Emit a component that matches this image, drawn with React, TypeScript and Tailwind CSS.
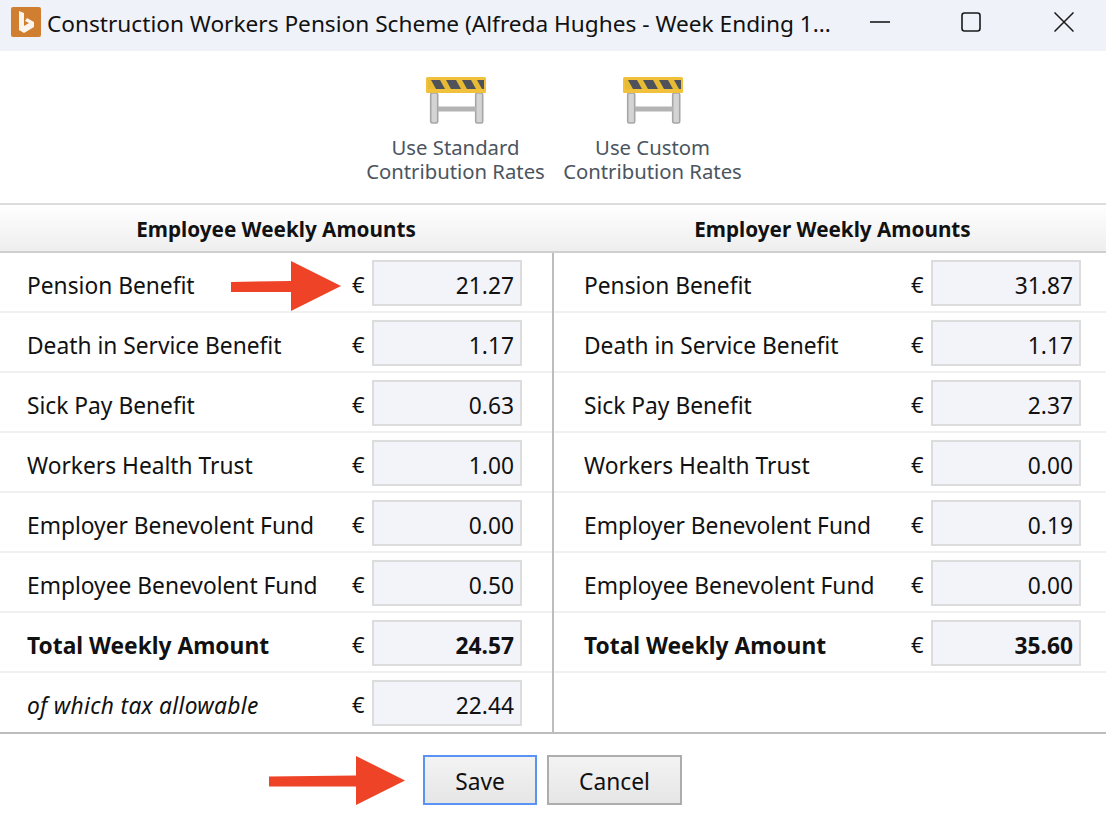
const font = { fontFamily: '"Noto Sans", "Open Sans", sans-serif' };

const left = [
  ["Pension Benefit", "21.27"],
  ["Death in Service Benefit", "1.17"],
  ["Sick Pay Benefit", "0.63"],
  ["Workers Health Trust", "1.00"],
  ["Employer Benevolent Fund", "0.00"],
  ["Employee Benevolent Fund", "0.50"],
];
const right = [
  ["Pension Benefit", "31.87"],
  ["Death in Service Benefit", "1.17"],
  ["Sick Pay Benefit", "2.37"],
  ["Workers Health Trust", "0.00"],
  ["Employer Benevolent Fund", "0.19"],
  ["Employee Benevolent Fund", "0.00"],
];

function Row({ label, value, variant, border = true, side }: { label: string; value: string; variant?: "bold" | "italic"; border?: boolean; side: "l" | "r" }) {
  return (
    <div className={`h-[60px] flex items-center pt-[2px] ${side === "l" ? "pl-[27px] pr-[30px]" : "pl-[30px] pr-[25px]"} ${border ? "border-b-2 border-[#f0f0f0]" : "pb-[2px]"}`}>
      <span className={`flex-1 pt-[6px] text-[22.75px] text-[#111] whitespace-nowrap ${variant === "bold" ? "font-bold" : ""} ${variant === "italic" ? "italic tracking-[0.3px]" : ""}`}>{label}</span>
      <span className="w-[20px] pt-[3px] text-[22px] text-[#111]">€</span>
      <div className={`w-[150px] h-[46px] pt-[6px] bg-[#f3f4f9] border-2 border-[#dcdcdc] flex items-center justify-end pr-[6px] text-[22.75px] text-[#111] ${variant === "bold" ? "font-bold" : ""}`}>{value}</div>
    </div>
  );
}

function Barrier() {
  return (
    <svg width="60" height="47" viewBox="0 0 60 47" className="blur-[0.4px]">
      <g fill="#d4d4d4" stroke="#a6a6a6" strokeWidth="1.6">
        <rect x="4.7" y="16" width="7" height="30" rx="1.5" />
        <rect x="49.7" y="16" width="7" height="30" rx="1.5" />
      </g>
      <rect x="12" y="29.5" width="38" height="5" fill="#b4b4b4" />
      <rect x="0" y="0" width="60" height="16" rx="1.5" fill="#f1c13b" />
      <rect x="2" y="3" width="56" height="9" fill="#4f525b" />
      <g fill="#e8bb35">
        <polygon points="2,3 5,3 10,12 2,12" />
        <polygon points="14,3 20,3 25,12 19,12" />
        <polygon points="30,3 36,3 41,12 35,12" />
        <polygon points="45,3 51,3 56,12 50,12" />
      </g>
    </svg>
  );
}

function Tool({ text, w }: { text: string; w: string }) {
  return (
    <div className={`${w} flex flex-col items-center`}>
      <Barrier />
      <div className="mt-[11px] text-center text-[20.3px] leading-[24px] text-[#4b5560]">{text}</div>
    </div>
  );
}

function Arrow({ w, h, shaft, className }: { w: number; h: number; shaft: number; className: string }) {
  const my = h / 2;
  return (
    <svg width={w} height={h} viewBox={`0 0 ${w} ${h}`} className={className}>
      <polygon fill="#ee4326" points={`0,${my - 4} ${shaft},${my - 5} ${shaft},0 ${w},${my} ${shaft},${h} ${shaft},${my + 6} 0,${my + 6}`} />
    </svg>
  );
}

export default function App() {
  return (
    <div className="relative w-[1106px] h-[822px] bg-white overflow-hidden" style={font}>
      <div className="h-[51px] bg-[#eff2f8] flex items-center pb-[7px]">
        <div className="ml-[11px] w-[30px] h-[30px] rounded-[2px] bg-[#cf7f2f] flex items-center justify-center">
          <svg width="18" height="24" viewBox="0 0 18 24">
            <polygon fill="#fff" opacity="0.92" points="2,1 7,3 7,16 12,13 8,11 10,8 17,12 17,17 7,23 2,20" />
          </svg>
        </div>
        <div className="ml-[6px] w-[790px] pt-[3px] text-[22.65px] text-[#111] whitespace-nowrap overflow-hidden">Construction Workers Pension Scheme (Alfreda Hughes - Week Ending 1...</div>
        <svg width="20" height="20" viewBox="0 0 20 20" className="ml-[33px]"><path d="M0 10h20" stroke="#1a1a1a" strokeWidth="1.6" /></svg>
        <svg width="20" height="20" viewBox="0 0 20 20" className="ml-[71px]"><rect x="1" y="1" width="18" height="18" rx="2.5" fill="none" stroke="#1a1a1a" strokeWidth="1.6" /></svg>
        <svg width="20" height="20" viewBox="0 0 20 20" className="ml-[73px]"><path d="M0.5 0.5l19 19M19.5 0.5l-19 19" stroke="#1a1a1a" strokeWidth="1.5" /></svg>
      </div>

      <div className="h-[154px] border-b-2 border-[#dcdcdc] flex pl-[364px] pt-[26px]">
        <Tool text="Use Standard Contribution Rates" w="w-[183px]" />
        <Tool text="Use Custom Contribution Rates" w="w-[183px] ml-[14px]" />
      </div>

      <div className="h-[48px] flex items-center pt-[4px] border-b-2 border-[#cfcfcf] bg-gradient-to-b from-white to-[#eeeeee] text-[20.7px] font-bold text-[#111]">
        <div className="w-[552px] text-center">Employee Weekly Amounts</div>
        <div className="flex-1 text-center pl-[7px]">Employer Weekly Amounts</div>
      </div>

      <div className="flex h-[481px] border-b-2 border-[#bdbdbd]">
        <div className="w-[554px] border-r-2 border-[#bdbdbd]">
          {left.map(([l, v]) => <Row key={l} side="l" label={l} value={v} />)}
          <Row side="l" label="Total Weekly Amount" value="24.57" variant="bold" />
          <Row side="l" label="of which tax allowable" value="22.44" variant="italic" border={false} />
        </div>
        <div className="flex-1">
          {right.map(([l, v]) => <Row key={l} side="r" label={l} value={v} />)}
          <Row side="r" label="Total Weekly Amount" value="35.60" variant="bold" />
        </div>
      </div>

      <div className="flex pl-[423px] pt-[21px] gap-[10px] text-[22.75px] text-[#111]">
        <button className="w-[114px] h-[50px] pt-[4px] border-2 border-[#5a93f2] bg-gradient-to-b from-[#f3f3f3] to-[#e6e6e6]">Save</button>
        <button className="w-[135px] h-[50px] pt-[4px] border-2 border-[#adadad] bg-gradient-to-b from-[#f3f3f3] to-[#e6e6e6]">Cancel</button>
      </div>

      <Arrow w={110} h={50} shaft={60} className="absolute left-[231px] top-[261px]" />
      <Arrow w={136} h={49} shaft={87} className="absolute left-[269px] top-[756px]" />
    </div>
  );
}
